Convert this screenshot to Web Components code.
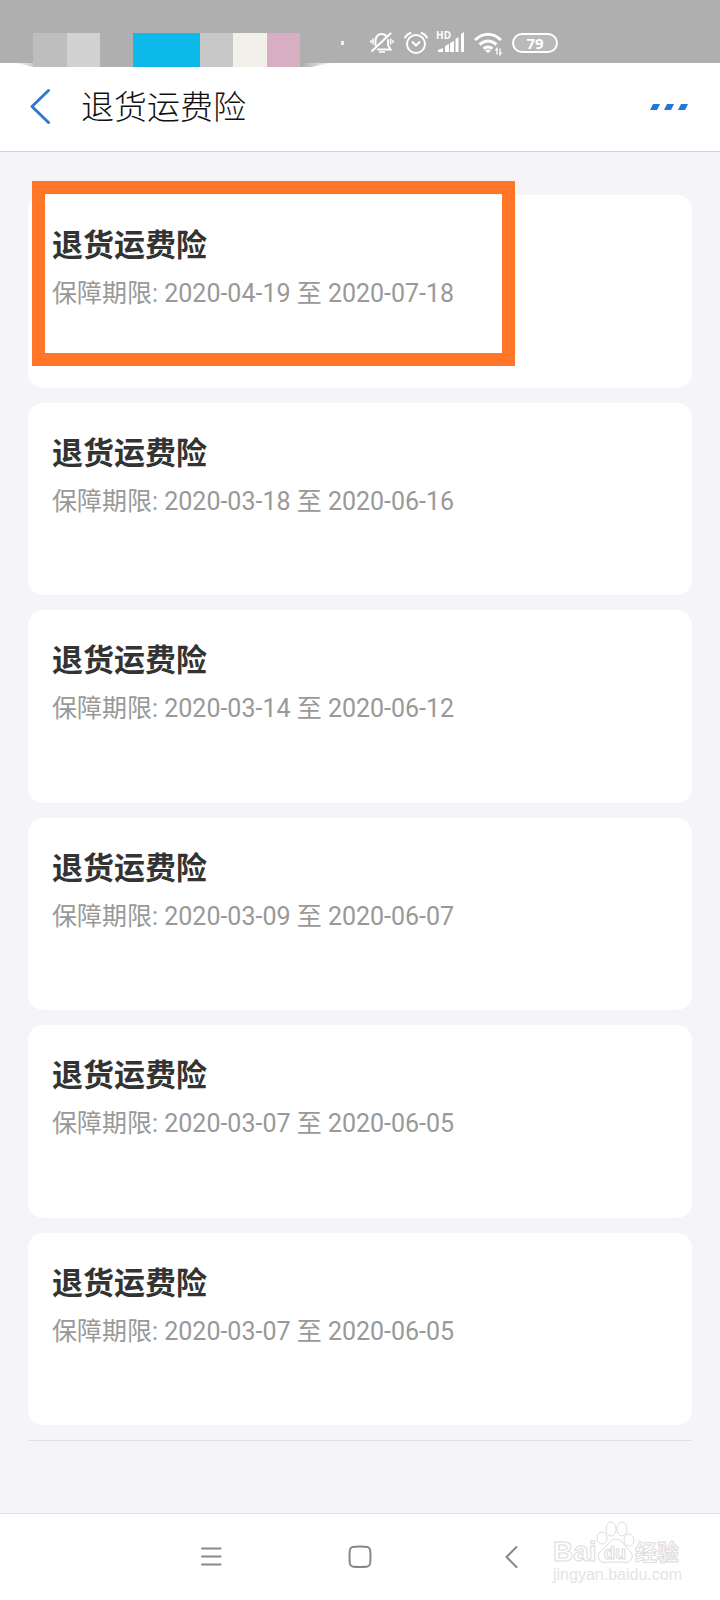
<!DOCTYPE html>
<html lang="zh-CN">
<head>
<meta charset="utf-8">
<meta name="viewport" content="width=device-width, initial-scale=1">
<title>退货运费险</title>

<style>
body {
	margin		:0;
	background	:#f4f4f9;
	font-family	:Roboto, "Noto Sans CJK SC", sans-serif;
}
</style>
</head>

<body>
<app-screen>
	<status-bar slot="top" level="79"></status-bar>
	<title-bar slot="top">退货运费险</title-bar>
	<policy-card from="2020-04-19" to="2020-07-18" marked>退货运费险</policy-card>
	<policy-card from="2020-03-18" to="2020-06-16">退货运费险</policy-card>
	<policy-card from="2020-03-14" to="2020-06-12">退货运费险</policy-card>
	<policy-card from="2020-03-09" to="2020-06-07">退货运费险</policy-card>
	<policy-card from="2020-03-07" to="2020-06-05">退货运费险</policy-card>
	<policy-card from="2020-03-07" to="2020-06-05">退货运费险</policy-card>
	<nav-bar slot="bottom"><water-mark></water-mark></nav-bar>
</app-screen>

<template id="app-screen">
	<style>
	:host {
		display		:flex;
		flex-direction	:column;
		min-height	:100vh;
	}
	main {
		flex		:1;
		display		:flex;
		flex-direction	:column;
		gap		:15px;
		padding		:43px 28px 72px;
	}
	::slotted(policy-card) {
		flex		:1 0 auto;
	}
	hr {
		width		:100%;
		margin		:0;
		border		:0;
		border-top	:1px solid #dfdfe4;
	}
	</style>
	<slot name="top"></slot>
	<main><slot></slot><hr></main>
	<slot name="bottom"></slot>
</template>

<template id="status-bar">
	<style>
	:host {
		display		:flex;
		box-sizing	:border-box;
		height		:63px;
		padding-top	:31px;
		background	:#afafaf;
		color		:#fff;
		position	:relative;
		z-index		:1;
	}
	svg {
		flex		:none;
		display		:block;
		overflow	:visible;
	}
	.icons {
		display		:flex;
		gap		:10px;
		padding-left	:22px;
	}
	.battery {
		box-sizing	:border-box;
		width		:46px;
		height		:20px;
		margin-top	:2px;
		border		:2px solid #fff;
		border-radius	:10px;
		background	:#b9b9b9;
		font		:bold 15px/16px "Open Sans", sans-serif;
		text-align	:center;
	}
	</style>
	<svg width="348" height="36" viewBox="0 0 348 36">
		<defs>
			<linearGradient id="fade">
				<stop offset="0" stop-color="#afafaf" stop-opacity="0"/>
				<stop offset=".1" stop-color="#afafaf"/>
				<stop offset=".9" stop-color="#afafaf"/>
				<stop offset="1" stop-color="#afafaf" stop-opacity="0"/>
			</linearGradient>
		</defs>
		<path d="M12 32H334Q322 33 312 36H33Q24 33 12 32Z" fill="url(#fade)"/>
		<path d="M33 2h34v34H33z" fill="#bebebe"/>
		<path d="M67 2h33v34H67z" fill="#d2d2d2"/>
		<path d="M133 2h67v34h-67z" fill="#0cb9e8"/>
		<path d="M200 2h33v34h-33z" fill="#c8c8c8"/>
		<path d="M233 2h34v34h-34z" fill="#f1f0e9"/>
		<path d="M267 2h33v34h-33z" fill="#d8afc2"/>
		<path d="M341 10h3v4h-3z" fill="#f2f2f2"/>
	</svg>
	<div class="icons">
		<svg width="24" height="24" fill="none" stroke="#fff" stroke-width="2" stroke-linecap="round">
			<path d="M5.500 14V9Q6.500 3 11.500 3Q15 3 16.500 5.500M18 9V14L20.500 18.500H8M2 20L20.500 2.500"/>
			<path d="M9.500 21h5M3 8v5M1 9.500v2M20.700 8v5M23 9.500v2" stroke-width="1.500"/>
		</svg>
		<svg width="24" height="24" fill="none" stroke="#fff" stroke-width="2" stroke-linecap="round">
			<circle cx="12" cy="13" r="9"/>
			<path d="M8.500 11L12 14.500L15.500 11M1 6.500Q3 3 6.500 2M23 6.500Q21 3 17.500 2"/>
		</svg>
		<svg width="26" height="24" fill="#fff">
			<path d="M0 21v-2l5-2v4zM7 21v-6l4-2v8zM12 21v-9l4-2v11zM17.500 21V8l3-2v15zM23 21V3l3-2v20z"/>
			<text x="-2" y="8" font-family="Open Sans" font-size="10" font-weight="bold">HD</text>
		</svg>
		<svg width="28" height="24" fill="none" stroke="#fff" stroke-width="3">
			<path d="M1 9Q14 -2.500 27 9M5.500 13.500Q14 6.500 22.500 13.500M9.500 17.500Q14 14.500 18.500 17.500"/>
			<path d="M11 19.500Q14 17.500 17 19.500L14 22Z" fill="#fff" stroke="none"/>
			<path d="M23 23.500v-6l-1.500 2M26 17.500v6l1.500 -2" stroke-width="1.300"/>
		</svg>
		<div class="battery"></div>
	</div>
</template>

<template id="title-bar">
	<style>
	:host {
		display		:flex;
		align-items	:center;
		box-sizing	:border-box;
		height		:89px;
		padding		:0 26px;
		background	:#fff;
		border-bottom	:1px solid #d4d4d6;
	}
	h1 {
		flex		:1;
		margin		:0 0 4px 25px;
		color		:#111;
		font		:300 33px/44px "Noto Sans CJK SC", sans-serif;
	}
	button {
		display		:block;
		padding		:0;
		border		:0;
		background	:none;
	}
	svg {
		display		:block;
	}
	</style>
	<button aria-label="返回">
		<svg width="30" height="40" fill="none" stroke="#3079cb" stroke-width="3" stroke-linecap="round" stroke-linejoin="round">
			<path d="M22.500 3.500L6 19.500L22.500 35.500"/>
		</svg>
	</button>
	<h1><slot></slot></h1>
	<button aria-label="更多">
		<svg width="44" height="40" fill="#2276dc">
			<path d="M3 17h7l-3 6H0zM17 17h7l-3 6h-7zM31 17h7l-3 6h-7z"/>
		</svg>
	</button>
</template>

<template id="policy-card">
	<style>
	:host {
		display		:block;
		box-sizing	:border-box;
		min-height	:180px;
		padding		:29px 24px;
		border-radius	:15px;
		background	:#fff;
		position	:relative;
	}
	h2 {
		margin		:0 0 8px;
		color		:#333;
		font-size	:31px;
		line-height	:44px;
	}
	p {
		margin		:0;
		color		:#999;
		font-size	:25px;
		line-height	:36px;
	}
	/* Рамка поверх отмеченной карточки */
	:host([marked])::after {
		content		:"";
		box-sizing	:border-box;
		position	:absolute;
		left		:4px;
		top		:-14px;
		width		:483px;
		height		:185px;
		border		:13px solid #ff7629;
	}
	</style>
	<h2><slot></slot></h2>
	<p></p>
</template>

<template id="nav-bar">
	<style>
	:host {
		display		:block;
		background	:#fff;
		border-top	:1px solid #e3e3e5;
		position	:relative;
	}
	nav {
		display		:flex;
		justify-content	:center;
		gap		:100px;
		padding		:18px 0;
	}
	button {
		width		:50px;
		height		:50px;
		padding		:0;
		border		:0;
		background	:none;
	}
	svg {
		display		:block;
		margin		:auto;
	}
	::slotted(water-mark) {
		position	:absolute;
		right		:36px;
		bottom		:12px;
	}
	</style>
	<nav>
		<button aria-label="菜单"><svg width="24" height="24" stroke="#888" stroke-width="2" stroke-linecap="round">
			<path d="M4 3.500H22.500M4 11.500H22.500M4 19.500H22.500"/>
		</svg></button>
		<button aria-label="主页"><svg width="24" height="24" fill="none" stroke="#888" stroke-width="2">
			<path d="M12 1.500Q17 1.500 19.500 2Q21.500 2.500 22 4.500Q22.500 7.500 22.500 11.500Q22.500 16.500 22 19Q21.500 21 19.500 21.500Q17 22 12 22Q7 22 4.500 21.500Q2.500 21 2 19Q1.500 16.500 1.500 11.500Q1.500 6.500 2 4.500Q2.500 2.500 4.500 2Q7 1.500 12 1.500Z"/>
		</svg></button>
		<button aria-label="返回"><svg width="24" height="24" fill="none" stroke="#888" stroke-width="2" stroke-linecap="round">
			<path d="M18.500 2L8.500 12L18.500 22"/>
		</svg></button>
	</nav>
	<slot></slot>
</template>

<template id="water-mark">
	<style>
	:host {
		display		:block;
	}
	svg {
		display		:block;
		overflow	:visible;
	}
	text {
		font-family	:"Liberation Sans", "Noto Sans CJK SC", sans-serif;
		font-weight	:bold;
	}
	</style>
	<svg width="132" height="66" fill="#fff" stroke="#dcdcdc" stroke-width="1">
		<text x="1" y="39" font-size="28">Bai</text>
		<ellipse cx="50" cy="16" rx="5" ry="6"/>
		<ellipse cx="59" cy="7" rx="5" ry="7"/>
		<ellipse cx="70" cy="7" rx="5" ry="7"/>
		<ellipse cx="77" cy="18" rx="5" ry="6"/>
		<path d="M63 17Q68 17 71 21Q74 25 78 29Q82 34 79 38Q76 42 69 40H57Q49 42 47 37Q45 32 50 28Q54 25 57 21Q59 17 63 17Z"/>
		<text x="52" y="37" font-size="18">du</text>
		<text x="83" y="38" font-size="22">经验</text>
		<text x="1" y="58" font-size="16" fill="#e4e4e4" stroke="none" style="font-weight: normal">jingyan.baidu.com</text>
	</svg>
</template>

<script>
class Base extends HTMLElement {
	constructor() {
		super();
		this.root = this.attachShadow({mode: "open"});
		this.root.append(
			document.getElementById(this.localName).content.cloneNode(true));
	}
}

class StatusBar extends Base {
	connectedCallback() {
		this.root.querySelector(".battery").textContent = this.getAttribute("level");
	}
}

class PolicyCard extends Base {
	connectedCallback() {
		const	from = this.getAttribute("from");
		const	to = this.getAttribute("to");
		this.root.querySelector("p").textContent = `保障期限: ${from} 至 ${to}`;
	}
}

customElements.define("app-screen", class extends Base {});
customElements.define("status-bar", StatusBar);
customElements.define("title-bar", class extends Base {});
customElements.define("policy-card", PolicyCard);
customElements.define("nav-bar", class extends Base {});
customElements.define("water-mark", class extends Base {});
</script>
</body>
</html>
